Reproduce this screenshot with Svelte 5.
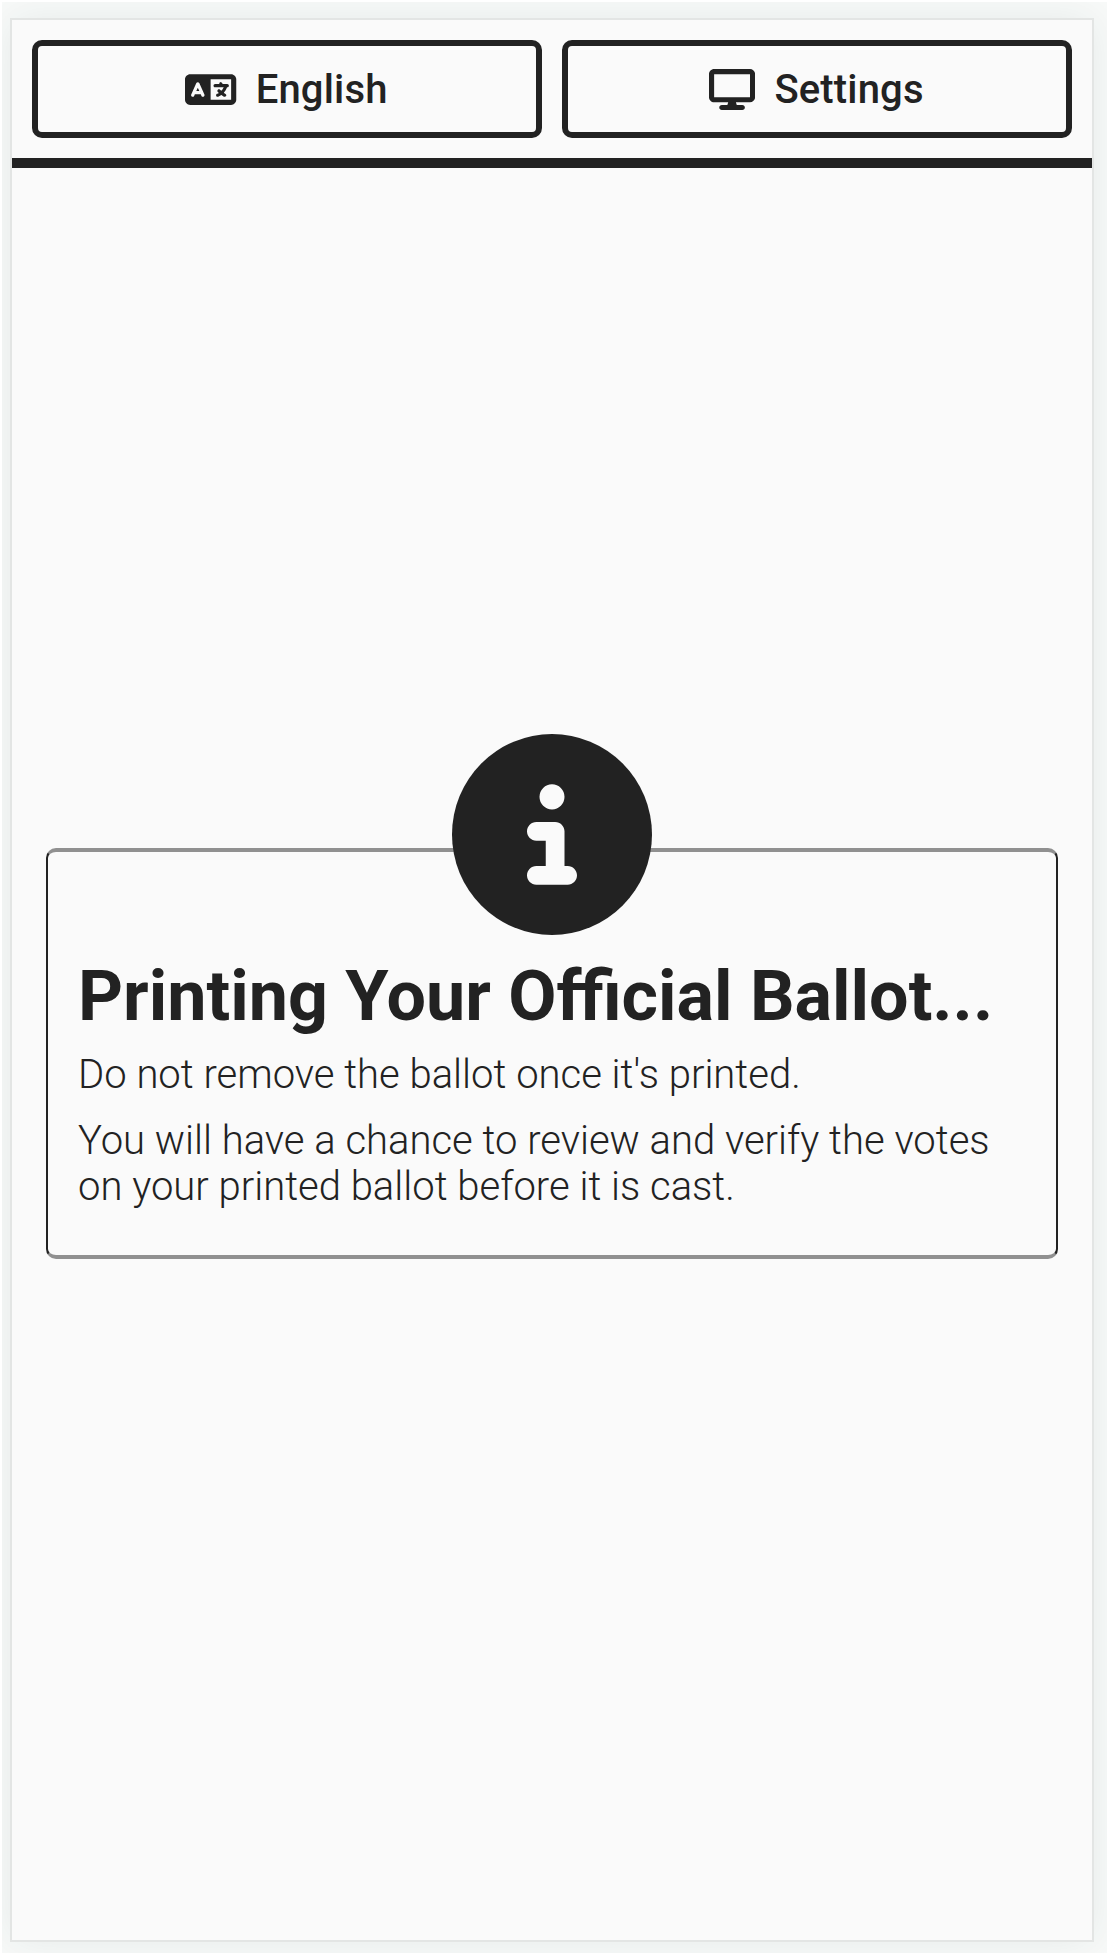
<script>
  const icons = {
    language: {
      width: 640,
      path: 'M0 128C0 92.7 28.7 64 64 64H256h48 16H576c35.3 0 64 28.7 64 64V384c0 35.3-28.7 64-64 64H320 304 256 64c-35.3 0-64-28.7-64-64V128zm320 0V384H576V128H320zM178.3 175.9c-3.2-7.2-10.4-11.9-18.3-11.9s-15.1 4.7-18.3 11.9l-64 144c-4.5 10.1 .1 21.9 10.2 26.4s21.9-.1 26.4-10.2l8.9-20.1h73.6l8.9 20.1c4.5 10.1 16.3 14.7 26.4 10.2s14.7-16.3 10.2-26.4l-64-144zM160 233.2L179 276H141l19-42.8zM448 164c11 0 20 9 20 20v4h44 16c11 0 20 9 20 20s-9 20-20 20h-2l-1.6 4.5c-8.9 24.4-22.4 46.6-39.6 65.4c.9 .6 1.8 1.1 2.7 1.6l18.9 11.3c9.5 5.7 12.5 18 6.9 27.4s-18 12.5-27.4 6.9l-18.9-11.3c-4.5-2.7-8.8-5.5-13.1-8.5c-10.6 7.5-21.9 14-34 19.4l-3.6 1.6c-10.1 4.5-21.9-.1-26.4-10.2s.1-21.9 10.2-26.4l3.6-1.6c6.4-2.9 12.6-6.1 18.5-9.8l-12.2-12.2c-7.8-7.8-7.8-20.5 0-28.3s20.5-7.8 28.3 0l14.6 14.6 .5 .5c12.4-13.1 22.5-28.3 29.8-45H448 376c-11 0-20-9-20-20s9-20 20-20h52v-4c0-11 9-20 20-20z',
    },
    display: {
      width: 576,
      path: 'M64 0C28.7 0 0 28.7 0 64V352c0 35.3 28.7 64 64 64H240l-10.7 32H160c-17.7 0-32 14.3-32 32s14.3 32 32 32H416c17.7 0 32-14.3 32-32s-14.3-32-32-32H346.7L336 416H512c35.3 0 64-28.7 64-64V64c0-35.3-28.7-64-64-64H64zM512 64V352H64V64H512z',
    },
  };
  const actions = [
    { label: 'English', icon: icons.language },
    { label: 'Settings', icon: icons.display },
  ];
</script>

<div class="stage">
  <div class="screen">
    <header>
      {#each actions as { label, icon }}
        <button type="button">
          <svg class="icon" viewBox="0 0 {icon.width} 512" aria-hidden="true"><path d={icon.path} /></svg>
          <span>{label}</span>
        </button>
      {/each}
    </header>
    <main>
      <section class="card">
        <svg class="info" viewBox="0 0 512 512" preserveAspectRatio="none" aria-hidden="true">
          <circle class="disc" cx="256" cy="256" r="256" />
          <path d="M216 336h24V272H216c-13.3 0-24-10.7-24-24s10.7-24 24-24h48c13.3 0 24 10.7 24 24v88h8c13.3 0 24 10.7 24 24s-10.7 24-24 24H216c-13.3 0-24-10.7-24-24s10.7-24 24-24zm40-208a32 32 0 1 1 0 64 32 32 0 1 1 0-64z" />
        </svg>
        <h1>Printing Your Official Ballot...</h1>
        <p>Do not remove the ballot once it's printed.</p>
        <p>You will have a chance to review and verify the votes on your printed ballot before it is cast.</p>
      </section>
    </main>
  </div>
</div>

<style>
  :global(body) {
    margin: 0;
    background: #fff;
  }
  .stage {
    box-sizing: border-box;
    width: 1107px;
    height: 1953px;
    border: solid #fff;
    border-width: 2px 0 0 2px;
    padding: 16px 13px 11px 8px;
    overflow: hidden;
    background: #f8faf9;
    color: #222;
    font-family: Roboto, sans-serif;
    font-size: 40px;
    line-height: 46px;
  }
  .screen {
    box-sizing: border-box;
    height: 1924px;
    border: 2px solid #e3e5e4;
    background: #fafafa;
    box-shadow: 0 0 40px rgba(30, 50, 45, 0.08);
    display: flex;
    flex-direction: column;
  }
  header {
    box-sizing: border-box;
    height: 148px;
    flex: none;
    display: grid;
    grid-template-columns: 1fr 1fr;
    gap: 20px;
    padding: 20px;
    border-bottom: 10px solid #222;
  }
  button {
    display: flex;
    align-items: center;
    justify-content: center;
    gap: 19px;
    border: 6px solid #222;
    border-radius: 10px;
    padding: 0 1px 0 0;
    background: transparent;
    color: inherit;
    font: inherit;
    font-weight: 500;
    letter-spacing: 0.16px;
  }
  button span {
    padding-top: 2px;
  }
  .icon {
    height: 41px;
    fill: currentColor;
  }
  main {
    flex: 1;
    padding: 0 34px;
  }
  .card {
    box-sizing: border-box;
    height: 411px;
    margin-top: 680px;
    padding: 0 30px;
    border: solid #222;
    border-width: 4px 2px;
    border-top-color: #909090;
    border-bottom-color: #909090;
    border-radius: 10px;
    display: flex;
    flex-direction: column;
  }
  .info {
    width: 200px;
    height: 201px;
    flex: none;
    align-self: center;
    margin-top: -118px;
    fill: #fafafa;
  }
  .disc {
    fill: #222;
  }
  h1 {
    margin: 19px 0 0;
    font-size: 70px;
    line-height: 84px;
    font-weight: 700;
    white-space: nowrap;
  }
  p {
    margin: 14px 0 10px;
    font-weight: 300;
  }
  p + p {
    margin-top: 10px;
  }
</style>
